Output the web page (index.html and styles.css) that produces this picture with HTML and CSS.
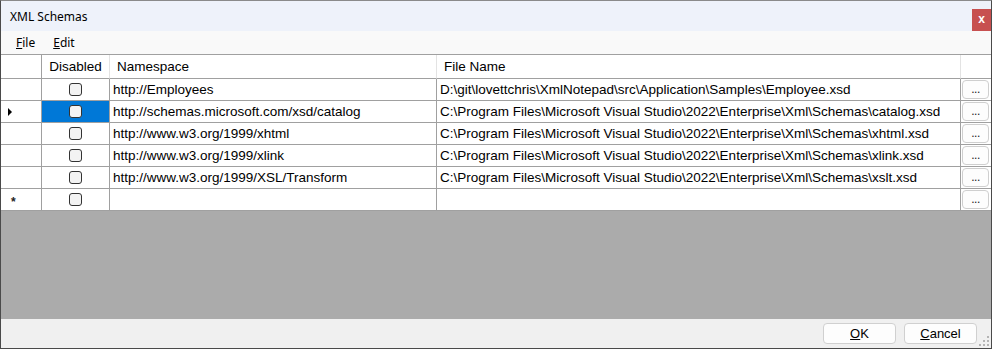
FILE: index.html
```html
<!DOCTYPE html>
<html>
<head>
<meta charset="utf-8">
<link rel="stylesheet" href="styles.css">
</head>
<body>
<div class="window">
  <div class="titlebar">
    <span class="title">XML Schemas</span>
    <span class="close">x</span>
  </div>
  <div class="menubar">
    <span class="menu"><u>F</u>ile</span>
    <span class="menu"><u>E</u>dit</span>
  </div>
  <div class="gridarea">
    <div class="grid">
      <div class="cell hdr"></div>
      <div class="cell hdr center soft">Disabled</div>
      <div class="cell hdr pad soft">Namespace</div>
      <div class="cell hdr pad soft">File Name</div>
      <div class="cell hdr last"></div>

      <div class="cell rh"></div>
      <div class="cell center"><span class="cb"></span></div>
      <div class="cell">http://Employees</div>
      <div class="cell">D:\git\lovettchris\XmlNotepad\src\Application\Samples\Employee.xsd</div>
      <div class="cell last"><span class="dots">...</span></div>

      <div class="cell rh"><span class="arrow"></span></div>
      <div class="cell center sel"><span class="cb"></span></div>
      <div class="cell">http://schemas.microsoft.com/xsd/catalog</div>
      <div class="cell">C:\Program Files\Microsoft Visual Studio\2022\Enterprise\Xml\Schemas\catalog.xsd</div>
      <div class="cell last"><span class="dots">...</span></div>

      <div class="cell rh"></div>
      <div class="cell center"><span class="cb"></span></div>
      <div class="cell">http://www.w3.org/1999/xhtml</div>
      <div class="cell">C:\Program Files\Microsoft Visual Studio\2022\Enterprise\Xml\Schemas\xhtml.xsd</div>
      <div class="cell last"><span class="dots">...</span></div>

      <div class="cell rh"></div>
      <div class="cell center"><span class="cb"></span></div>
      <div class="cell">http://www.w3.org/1999/xlink</div>
      <div class="cell">C:\Program Files\Microsoft Visual Studio\2022\Enterprise\Xml\Schemas\xlink.xsd</div>
      <div class="cell last"><span class="dots">...</span></div>

      <div class="cell rh"></div>
      <div class="cell center"><span class="cb"></span></div>
      <div class="cell">http://www.w3.org/1999/XSL/Transform</div>
      <div class="cell">C:\Program Files\Microsoft Visual Studio\2022\Enterprise\Xml\Schemas\xslt.xsd</div>
      <div class="cell last"><span class="dots">...</span></div>

      <div class="cell rh"><span class="star">*</span></div>
      <div class="cell center"><span class="cb"></span></div>
      <div class="cell"></div>
      <div class="cell"></div>
      <div class="cell last"><span class="dots">...</span></div>
    </div>
  </div>
  <div class="footer">
    <span class="btn"><u>O</u>K</span>
    <span class="btn"><u>C</u>ancel</span>
    <svg class="grip" width="11" height="11" viewBox="0 0 11 11">
      <rect x="8" y="0" width="2" height="2" fill="#b4b4b4"/>
      <rect x="4" y="4" width="2" height="2" fill="#b4b4b4"/>
      <rect x="8" y="4" width="2" height="2" fill="#b4b4b4"/>
      <rect x="0" y="8" width="2" height="2" fill="#b4b4b4"/>
      <rect x="4" y="8" width="2" height="2" fill="#b4b4b4"/>
      <rect x="8" y="8" width="2" height="2" fill="#b4b4b4"/>
    </svg>
  </div>
</div>
</body>
</html>
```

FILE: styles.css
```css
html, body {
  margin: 0;
  padding: 0;
  background: #ffffff;
}

.window {
  width: 992px;
  height: 349px;
  box-sizing: border-box;
  border: 1px solid #4a4a4a;
  border-top-color: #8a8a8a;
  display: flex;
  flex-direction: column;
  overflow: hidden;
  font-family: "Liberation Sans", Arial, sans-serif;
}

.titlebar {
  height: 30px;
  flex: none;
  background: #eef2fa;
  display: flex;
  align-items: center;
}

.title {
  font-family: "Noto Sans", "Open Sans", sans-serif;
  font-size: 12px;
  color: #000;
  padding-left: 9px;
  padding-top: 1px;
}

.close {
  margin-left: auto;
  align-self: flex-end;
  width: 19px;
  height: 22px;
  background: #c75050;
  color: #fff;
  font-family: "Liberation Sans", Arial, sans-serif;
  font-size: 12px;
  font-weight: bold;
  display: flex;
  align-items: center;
  justify-content: center;
  padding-bottom: 2px;
  box-sizing: border-box;
}

.menubar {
  height: 23px;
  flex: none;
  background: #f9f9f9;
  display: flex;
  align-items: center;
  gap: 18px;
  padding-left: 15px;
  font-family: "Noto Sans", "Open Sans", sans-serif;
  font-size: 12px;
  color: #000;
}

.gridarea {
  flex: 1;
  min-height: 0;
  background: #ababab;
  border-top: 1px solid #a0a0a0;
}

.grid {
  display: grid;
  grid-template-columns: 41px 68px 327px 524px 30px;
  grid-template-rows: 24px repeat(6, 22px);
  background: #fff;
  font-size: 13.5px;
  color: #000;
}

.cell {
  box-sizing: border-box;
  border-right: 1px solid #a0a0a0;
  border-bottom: 1px solid #a0a0a0;
  display: flex;
  align-items: center;
  padding-left: 3px;
  white-space: nowrap;
  overflow: hidden;
  background: #fff;
}

.cell.last {
  border-right: none;
  padding-left: 1px;
}

.hdr.soft {
  border-right-color: #e3e3e3;
}

.hdr.last {
  border-right: none;
}

.hdr.pad {
  padding-left: 7px;
}

.center {
  justify-content: center;
  padding-left: 0;
}

.sel {
  background: #0078d7;
}

.rh {
  padding-left: 7px;
}

.arrow {
  width: 0;
  height: 0;
  border-top: 4px solid transparent;
  border-bottom: 4px solid transparent;
  border-left: 4px solid #000;
}

.star {
  font-size: 12px;
  font-weight: bold;
  color: #222;
  padding-left: 3px;
  padding-top: 5px;
}

.cb {
  width: 13px;
  height: 13px;
  box-sizing: border-box;
  border: 1px solid #333;
  border-radius: 3px;
  background: #f3f3f3;
}

.dots {
  width: 27px;
  height: 19px;
  box-sizing: border-box;
  border: 1px solid #cfcfcf;
  border-radius: 4px;
  background: #fdfdfd;
  font-size: 12px;
  color: #222;
  display: flex;
  justify-content: center;
  align-items: flex-end;
  line-height: 11px;
  padding-bottom: 3px;
  letter-spacing: -0.5px;
}

.footer {
  height: 29px;
  flex: none;
  background: #f0f0f0;
  display: flex;
  justify-content: flex-end;
  align-items: flex-start;
  padding-top: 4px;
  box-sizing: border-box;
  gap: 8px;
}

.btn {
  width: 73px;
  height: 21px;
  box-sizing: border-box;
  border: 1px solid #d0d0d0;
  border-radius: 4px;
  background: #fdfdfd;
  font-size: 13px;
  color: #000;
  display: flex;
  align-items: center;
  justify-content: center;
}

.grip {
  align-self: flex-end;
  margin-left: -6px;
  margin-bottom: 1px;
  margin-right: 1px;
}
```
